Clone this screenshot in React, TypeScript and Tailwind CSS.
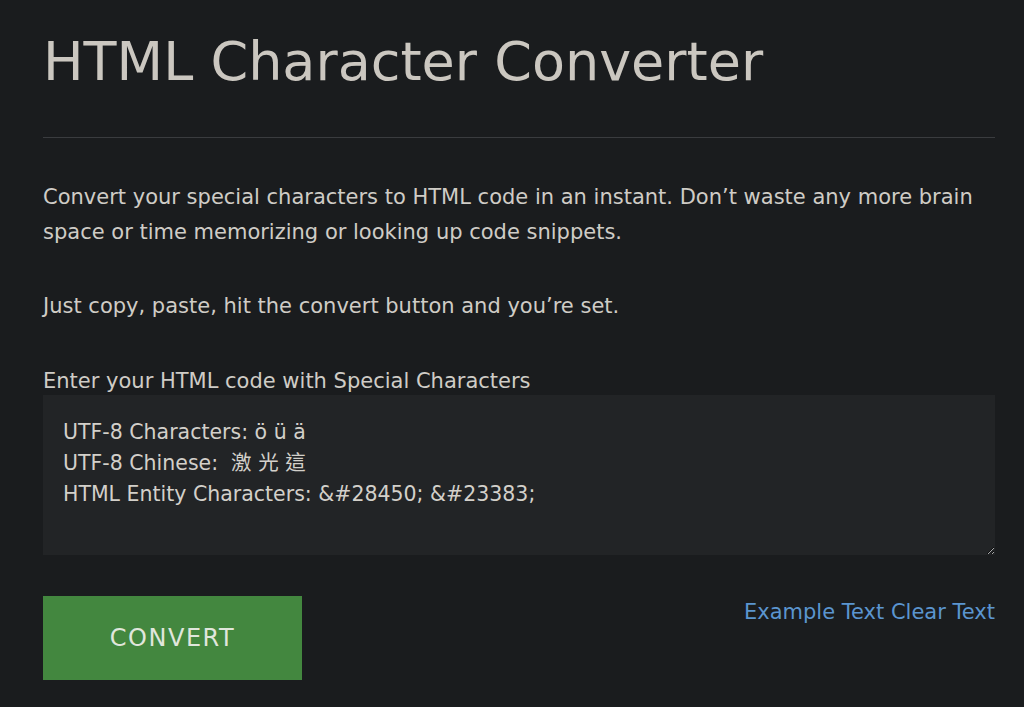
export default function App() {
  const font = { fontFamily: '"DejaVu Sans", "Noto Sans CJK TC", sans-serif' };
  return (
    <div className="min-h-[707px] w-full bg-[#1a1c1e] text-[#cfccc6]" style={font}>
      <div className="px-[43px] pt-[24px]">
        <h1 className="text-[54px] leading-[76px] font-normal text-[#cbc7c0]">HTML Character Converter</h1>
        <div className="mt-[37px] h-px w-[952px] bg-[#3a3c3f]" />
        <p className="mt-[42px] text-[21px] leading-[35px] w-[960px]">
          Convert your special characters to HTML code in an instant. Don’t waste any more brain space or time memorizing or looking up code snippets.
        </p>
        <p className="mt-[39px] text-[21px] leading-[35px]">Just copy, paste, hit the convert button and you’re set.</p>
        <label className="block mt-[43px] text-[21px] leading-[28px] font-medium">Enter your HTML code with Special Characters</label>
        <textarea
          className="block mt-[0px] w-[952px] h-[160px] bg-[#222426] text-[#d3d0ca] text-[20.5px] leading-[31px] px-[20px] pt-[22px] pb-[18px] outline-none"
          style={font}
          defaultValue={"UTF-8 Characters: ö ü ä\nUTF-8 Chinese:  激 光 這\nHTML Entity Characters: &#28450; &#23383;"}
        />
        <div className="mt-[41px] flex w-[952px] items-start justify-between">
          <button className="w-[259px] h-[84px] bg-[#43873f] text-[#e0e6dc] text-[24px] tracking-[1.5px]">CONVERT</button>
          <div className="mt-[2px] text-[21px] leading-[28px] text-[#5b95cf]">
            <a>Example Text</a> <a>Clear Text</a>
          </div>
        </div>
      </div>
    </div>
  );
}
